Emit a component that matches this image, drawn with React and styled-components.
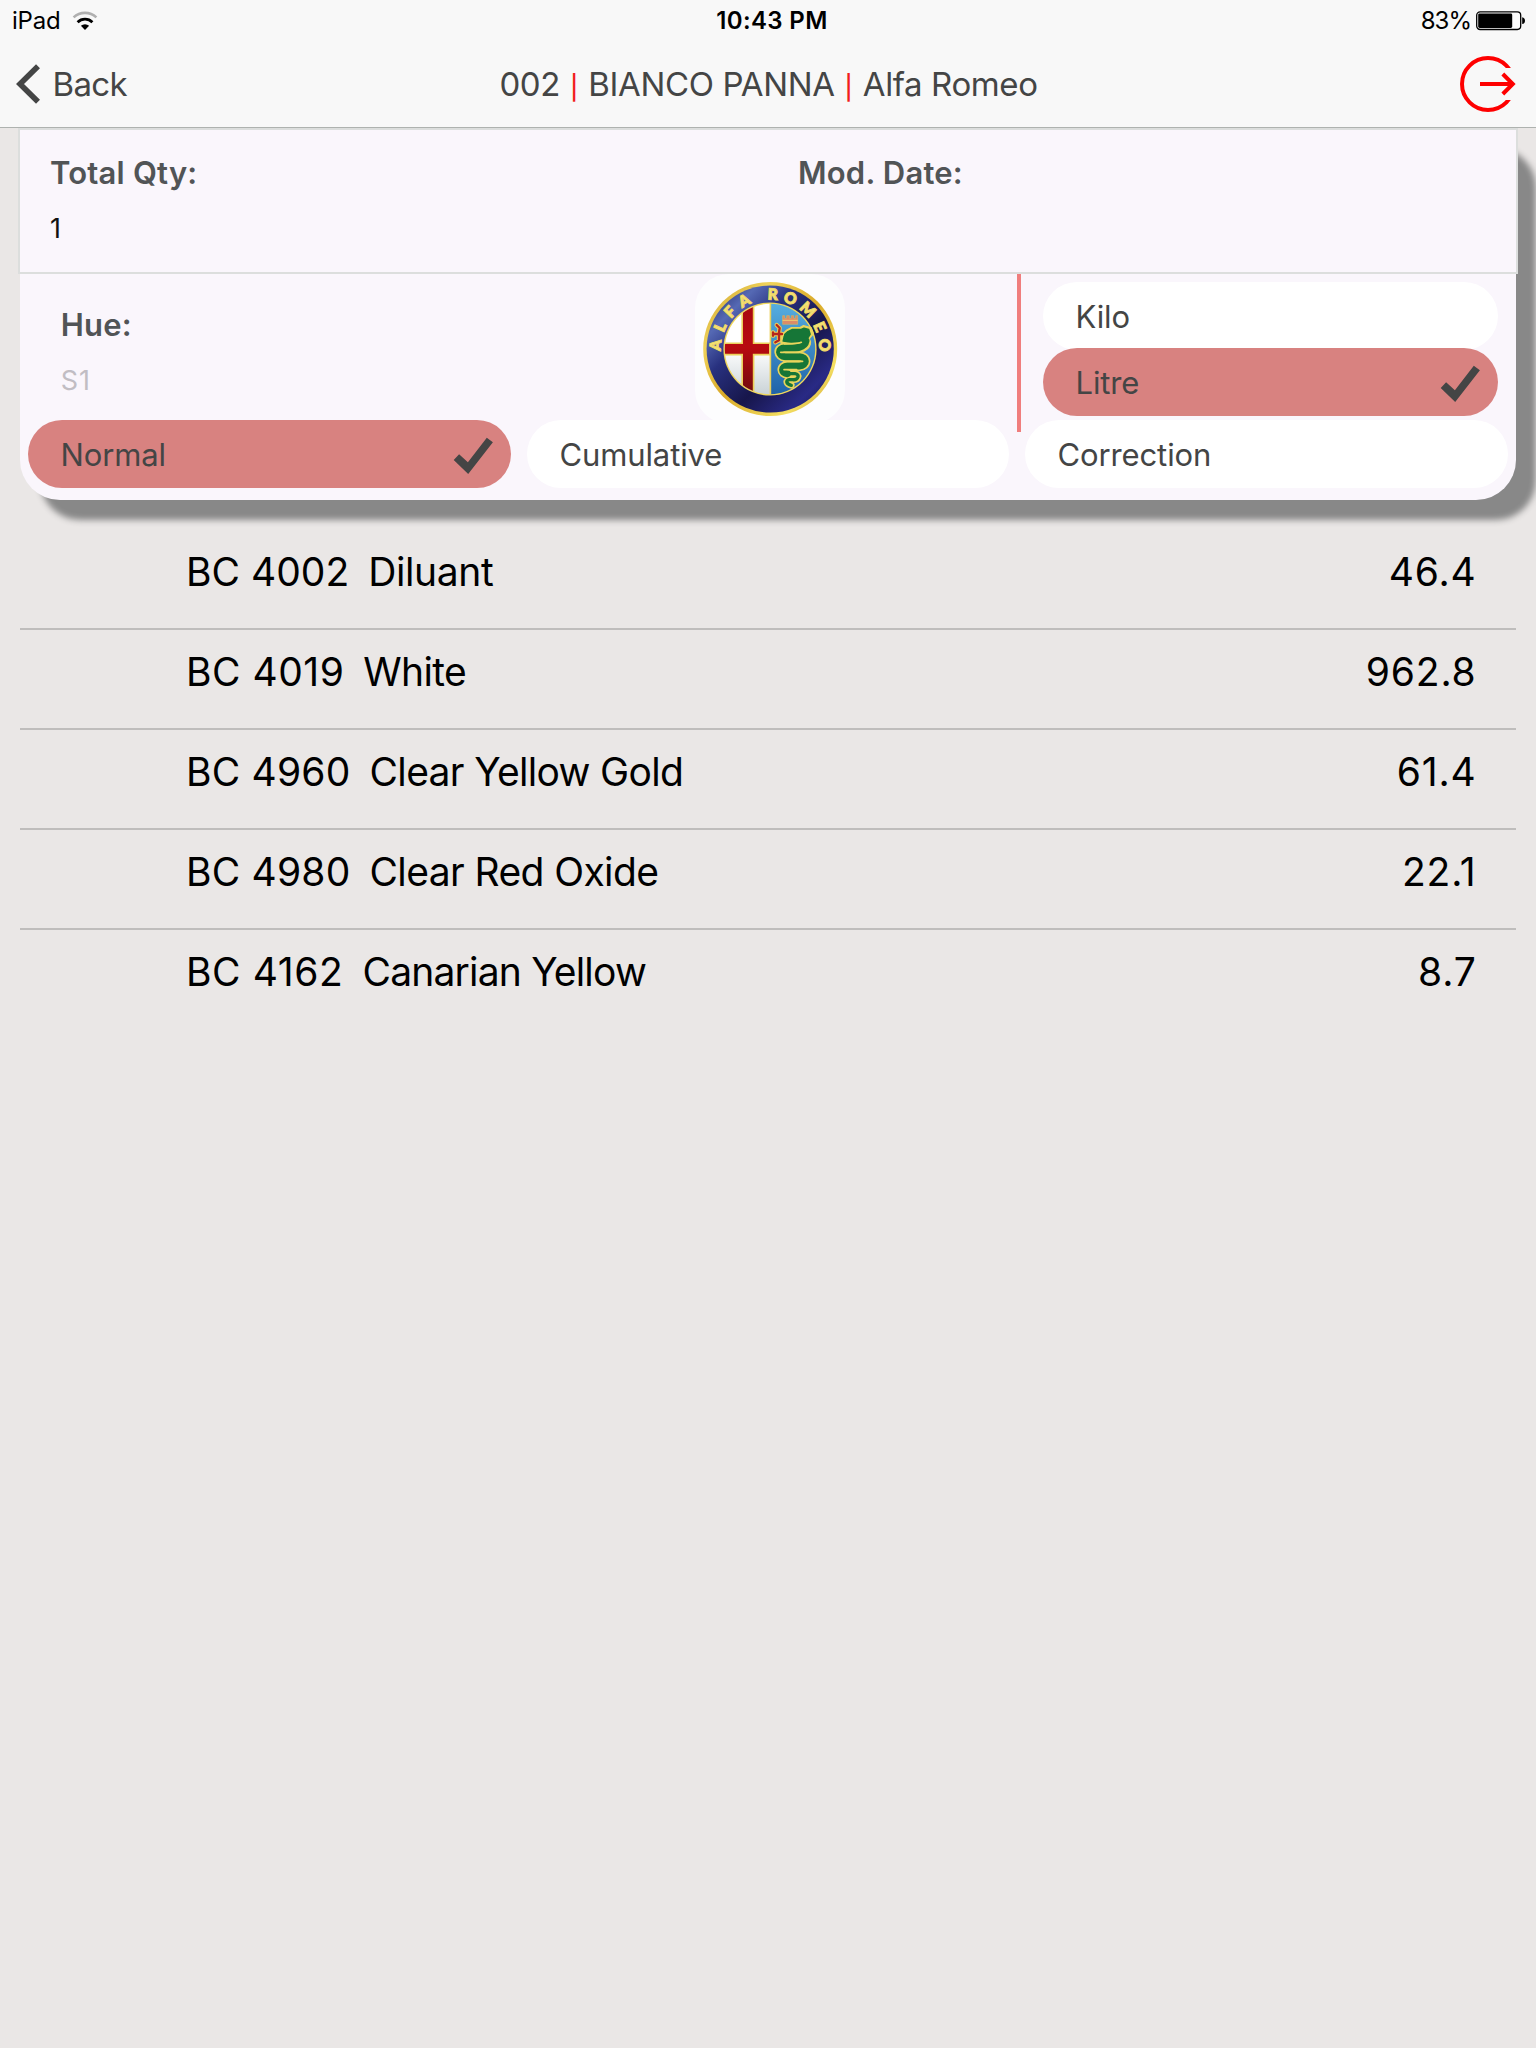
import React from "react";
import styled, { createGlobalStyle } from "styled-components";

const ink = "#444545";

const GlobalStyle = createGlobalStyle`
  html, body { margin: 0; padding: 0; background: #eae7e6; }
  *, *::before, *::after { box-sizing: border-box; }
`;

const Screen = styled.div`
  display: flex;
  flex-direction: column;
  width: 1536px;
  height: 2048px;
  overflow: hidden;
  background: #eae7e6;
  color: ${ink};
  font-family: Inter, Roboto, "Liberation Sans", sans-serif;
  white-space: nowrap;
`;

const Header = styled.header`
  flex: none;
  height: 128px;
  background: #f8f8f8;
  border-bottom: 1px solid #aeb2af;
`;

const StatusBar = styled.div`
  display: grid;
  grid-template-columns: 1fr auto 1fr;
  align-items: center;
  height: 41px;
  padding: 0 10px 0 12px;
  color: #000;
  font-size: 24px;
  line-height: 41px;
`;

const StatusGroup = styled.div`
  display: flex;
  align-items: center;
  justify-content: ${(p) => (p.$end ? "flex-end" : "flex-start")};
  gap: ${(p) => (p.$end ? "5px" : "11px")};
  letter-spacing: ${(p) => (p.$end ? "-1px" : "-0.2px")};
`;

const Clock = styled.div`
  padding-left: 6px;
  font-weight: 600;
  letter-spacing: 0.35px;
`;

const NavBar = styled.nav`
  display: grid;
  grid-template-columns: 1fr auto 1fr;
  grid-template-rows: 86px;
  align-items: center;
  padding: 0 20px 0 16px;
  font-size: 33px;
  line-height: 86px;
`;

const BackButton = styled.div`
  display: flex;
  align-items: center;
  gap: 10.5px;
  letter-spacing: -0.65px;
`;

const Title = styled.h1`
  display: flex;
  align-items: baseline;
  margin: 0 0 0 5px;
  font-size: 33px;
  font-weight: 400;
`;

const TitlePart = styled.span`
  letter-spacing: ${(p) => p.$track}px;
`;

const TitleBar = styled.span`
  margin: 0 10px;
  color: #f21d1d;
  font-size: 24px;
  font-weight: 500;
  line-height: 1;
`;

const NavAction = styled.div`
  display: flex;
  justify-content: flex-end;
`;

const Card = styled.section`
  flex: none;
  display: flex;
  flex-direction: column;
  width: 1496px;
  height: 372px;
  margin-left: 20px;
  border-radius: 40px;
  background: #faf6fc;
  box-shadow: 20px 20px 6px #888;
`;

const Summary = styled.div`
  flex: none;
  display: grid;
  grid-template-columns: 748px 1fr;
  height: 146px;
  margin: 0 -2px;
  padding: 24px 0 0 30px;
  border: 2px solid #dcdedd;
  background: #faf6fc;
`;

const Label = styled.div`
  color: #515456;
  font-size: 31px;
  font-weight: 600;
  line-height: 38px;
  letter-spacing: 0.2px;
`;

const FieldValue = styled.div`
  margin-top: 18px;
  color: ${(p) => (p.$muted ? "#c1bdc3" : "#111")};
  font-size: 27px;
  line-height: 38px;
  letter-spacing: 1px;
`;

const Details = styled.div`
  flex: none;
  display: flex;
  height: 146px;
`;

const Hue = styled.div`
  width: 675px;
  padding: 32px 0 0 40.7px;
`;

const Brand = styled.div`
  width: 322px;
  height: 146px;
`;

const Rule = styled.div`
  width: 4px;
  height: 158px;
  background: #f07e7d;
`;

const Units = styled.div`
  width: 455px;
  margin: 8px 0 0 22px;
`;

const Modes = styled.div`
  display: grid;
  grid-template-columns: 483px 482px 483px;
  gap: 16px;
  padding-left: 8px;
`;

const Pill = styled.div`
  display: flex;
  align-items: center;
  justify-content: space-between;
  height: 68px;
  margin-top: ${(p) => (p.$overlap ? "-2px" : "0")};
  padding: 1px 18px 0 32.5px;
  border-radius: 34px;
  background: ${(p) => (p.$active ? "#d88280" : "#fff")};
  font-size: 31px;
  letter-spacing: -0.12px;

  svg { margin-top: 2px; }
`;

const List = styled.ul`
  flex: none;
  width: 1496px;
  margin: 30px 0 0 20px;
  padding: 0;
  list-style: none;
  color: #000;
  font-size: 39px;
  line-height: 84px;
`;

const Row = styled.li`
  display: flex;
  height: 100px;
  padding: 0 39.5px 0 166px;
  border-bottom: 2px solid #bfbdbc;

  &:last-child { border-bottom: 0; }
`;

const Code = styled.span`
  margin-right: 19px;
  letter-spacing: ${(p) => p.$track}px;
`;

const Name = styled.span`
  flex: 1;
  letter-spacing: ${(p) => p.$track}px;
`;

const Amount = styled.span`
  letter-spacing: 0.8px;
`;

const Wifi = () => (
  <svg width="26" height="20" viewBox="0 0 26 20" fill="none">
    <path d="M1.6 6.4A16.7 16.7 0 0 1 24.4 6.4" stroke="#b0b0b0" strokeWidth="2.6" />
    <path d="M5.6 11.2A10.6 10.6 0 0 1 20.4 11.2" stroke="#000" strokeWidth="2.8" />
    <path d="M13 19L8.9 14.8A6 6 0 0 1 17.1 14.8Z" fill="#000" />
  </svg>
);

const Battery = () => (
  <svg width="50" height="20" viewBox="0 0 50 20">
    <rect x="0.7" y="0.9" width="44" height="17.6" rx="3.4" fill="#fff" fillOpacity=".5" stroke="#000" strokeWidth="1.3" />
    <rect x="2.2" y="2.4" width="34" height="14.6" rx="1.4" fill="#000" />
    <path d="M46.2 6.3q2.8.6 2.8 3.4t-2.8 3.4z" fill="#000" />
  </svg>
);

const Chevron = () => (
  <svg width="26" height="42" viewBox="0 0 26 42" fill="none">
    <path d="M22 3.2L4 21L22 38.8" stroke={ink} strokeWidth="5.6" />
  </svg>
);

const Exit = () => (
  <svg width="56" height="56" viewBox="0 0 56 56" fill="none" stroke="#fe0000" strokeWidth="4">
    <clipPath id="exit-gap">
      <path d="M0 0H56V12H0ZM0 12H40V44H0ZM0 44H56V56H0Z" />
    </clipPath>
    <circle cx="28" cy="28" r="26" clipPath="url(#exit-gap)" />
    <path d="M20 28H53M42.8 18L52.8 28L42.8 38" />
  </svg>
);

const Check = () => (
  <svg width="40" height="37" viewBox="0 0 40 37" fill={ink}>
    <path d="M33.8.7L39.9 5.3L15.2 37L.7 23L6.1 17.3L14.9 25.3Z" />
  </svg>
);

const letters = [
  ["A", 176], ["L", 156], ["F", 137], ["A", 118],
  ["R", 87], ["O", 68], ["M", 46], ["E", 24], ["O", 4],
];

const AlfaLogo = () => (
  <svg width="150" height="150" viewBox="0 0 150 150">
    <defs>
      <linearGradient id="gold" x1="0" y1="0" x2="1" y2="1">
        <stop offset="0" stopColor="#c99c24" />
        <stop offset=".25" stopColor="#f0d35a" />
        <stop offset=".5" stopColor="#d9a928" />
        <stop offset=".8" stopColor="#f4df62" />
        <stop offset="1" stopColor="#bd8214" />
      </linearGradient>
      <linearGradient id="navy" x1="0" y1="0" x2="1" y2="1">
        <stop offset="0" stopColor="#1b1e5e" />
        <stop offset=".2" stopColor="#5569b4" />
        <stop offset=".36" stopColor="#28317f" />
        <stop offset=".6" stopColor="#17164b" />
        <stop offset=".82" stopColor="#292a85" />
        <stop offset="1" stopColor="#121139" />
      </linearGradient>
      <linearGradient id="sky" x1="0" y1="0" x2="0" y2="1">
        <stop offset="0" stopColor="#56aee0" />
        <stop offset="1" stopColor="#1f62a8" />
      </linearGradient>
      <linearGradient id="red" x1="0" y1="0" x2="0" y2="122" gradientUnits="userSpaceOnUse">
        <stop offset=".25" stopColor="#a8080e" />
        <stop offset=".6" stopColor="#b80a10" />
        <stop offset="1" stopColor="#6c0c0e" />
      </linearGradient>
      <linearGradient id="white" x1="0" y1="0" x2="0" y2="1">
        <stop offset=".5" stopColor="#fff" />
        <stop offset="1" stopColor="#c9d2d6" />
      </linearGradient>
      <clipPath id="shield">
        <circle cx="75" cy="75" r="45.2" />
      </clipPath>
    </defs>
    <rect width="150" height="150" rx="34" fill="#fdfdfe" />
    <circle cx="75.2" cy="75" r="67" fill="url(#gold)" />
    <circle cx="75.2" cy="75" r="63.6" fill="url(#navy)" />
    <circle cx="75" cy="75" r="46.6" fill="#f0d75c" />
    <g clipPath="url(#shield)">
      <rect x="29" y="29" width="46" height="92" fill="url(#white)" />
      <rect x="75.6" y="29" width="46" height="92" fill="url(#sky)" />
      <path d="M46.4 28H59.4V68.4H75V81.4H59.4V122H46.4V81.4H28V68.4H46.4Z" fill="#ecd05a" />
      <path d="M48 28H57.8V70H74V79.8H57.8V122H48V79.8H28V70H48Z" fill="url(#red)" />
      <rect x="74.6" y="29" width="1.6" height="92" fill="#ecd05a" />
    </g>
    <g transform="translate(-15 -9) scale(.33333)" fill="none" strokeLinecap="round" strokeLinejoin="round">
      <path d="M308 177V152H314V160H320V152H328V160H334V152H341V160H347V152H353V177Z" fill="#dc8b68" stroke="#d9b45c" strokeWidth="2" />
      <path d="M309 166H352" stroke="#f0cf70" strokeWidth="3" />
      <g stroke="#e9d55c">
        <path d="M310 208L320 198L334 190L360 190L370 184L392 190L398 206L384 222L388 238L370 250H300L308 232L294 226Z" fill="#e9d55c" strokeWidth="8" />
        <path d="M378 232C374 254 340 249 314 249C292 249 294 273 316 275H358C382 276 382 302 358 303H322C302 304 304 325 322 326" strokeWidth="31" />
        <path d="M322 326H345C362 328 354 346 338 344H328C316 346 318 357 334 361" strokeWidth="20" />
      </g>
      <g stroke="#167637">
        <path d="M314 209L324 200L336 194L362 194L372 190L386 194L390 208L380 224L350 234L310 228Z" fill="#167637" strokeWidth="5" />
        <path d="M378 228C374 252 340 249 314 249C292 249 294 273 316 275H358C382 276 382 302 358 303H322C302 304 304 325 322 326" strokeWidth="21" />
        <path d="M322 326H345C362 328 354 346 338 344H328C316 346 318 357 334 361" strokeWidth="10" />
      </g>
      <path d="M314 237C330 234 352 238 364 232M302 262H358M368 289H312M312 314H350" stroke="#e9d55c" strokeWidth="5" />
      <path d="M290 180L299 189L297 203L297 226L286 232M280 207H306M279 202V212" stroke="#edcf58" strokeWidth="13" />
      <path d="M290 180L299 189L297 203L297 226L286 232M280 207H306M279 202V212" stroke="#b5251c" strokeWidth="7" />
    </g>
    <g fill="#f5e37a" stroke="#f0d866" strokeWidth="1.1" fontFamily="Lato, sans-serif" fontWeight="900" fontSize="15.5" textAnchor="middle">
      {letters.map(([ch, angle]) => (
        <text key={angle} transform={`translate(75 75) rotate(${90 - angle})`} y="-49.2">{ch}</text>
      ))}
    </g>
  </svg>
);

const Option = ({ label, active, overlap }) => (
  <Pill $active={active} $overlap={overlap}>
    {label}
    {active && <Check />}
  </Pill>
);

const components = [
  { code: "BC 4002", name: "Diluant", amount: "46.4", codeTrack: 0, nameTrack: -0.38 },
  { code: "BC 4019", name: "White", amount: "962.8", codeTrack: 0.5, nameTrack: -0.65 },
  { code: "BC 4960", name: "Clear Yellow Gold", amount: "61.4", codeTrack: 0.2, nameTrack: -0.67 },
  { code: "BC 4980", name: "Clear Red Oxide", amount: "22.1", codeTrack: 0.2, nameTrack: -0.6 },
  { code: "BC 4162", name: "Canarian Yellow", amount: "8.7", codeTrack: 0.6, nameTrack: -0.81 },
];

export default function App() {
  return (
    <Screen>
      <GlobalStyle />
      <Header>
        <StatusBar>
          <StatusGroup>
            iPad
            <Wifi />
          </StatusGroup>
          <Clock>10:43 PM</Clock>
          <StatusGroup $end>
            83%
            <Battery />
          </StatusGroup>
        </StatusBar>
        <NavBar>
          <BackButton>
            <Chevron />
            Back
          </BackButton>
          <Title>
            <TitlePart $track={-0.4}>002</TitlePart>
            <TitleBar>|</TitleBar>
            <TitlePart $track={-0.36}>BIANCO PANNA</TitlePart>
            <TitleBar>|</TitleBar>
            <TitlePart $track={-0.4}>Alfa Romeo</TitlePart>
          </Title>
          <NavAction>
            <Exit />
          </NavAction>
        </NavBar>
      </Header>
      <Card>
        <Summary>
          <div>
            <Label>Total Qty:</Label>
            <FieldValue>1</FieldValue>
          </div>
          <Label>Mod. Date:</Label>
        </Summary>
        <Details>
          <Hue>
            <Label>Hue:</Label>
            <FieldValue $muted>S1</FieldValue>
          </Hue>
          <Brand>
            <AlfaLogo />
          </Brand>
          <Rule />
          <Units>
            <Option label="Kilo" />
            <Option label="Litre" active overlap />
          </Units>
        </Details>
        <Modes>
          <Option label="Normal" active />
          <Option label="Cumulative" />
          <Option label="Correction" />
        </Modes>
      </Card>
      <List>
        {components.map((c) => (
          <Row key={c.code}>
            <Code $track={c.codeTrack}>{c.code}</Code>
            <Name $track={c.nameTrack}>{c.name}</Name>
            <Amount>{c.amount}</Amount>
          </Row>
        ))}
      </List>
    </Screen>
  );
}
